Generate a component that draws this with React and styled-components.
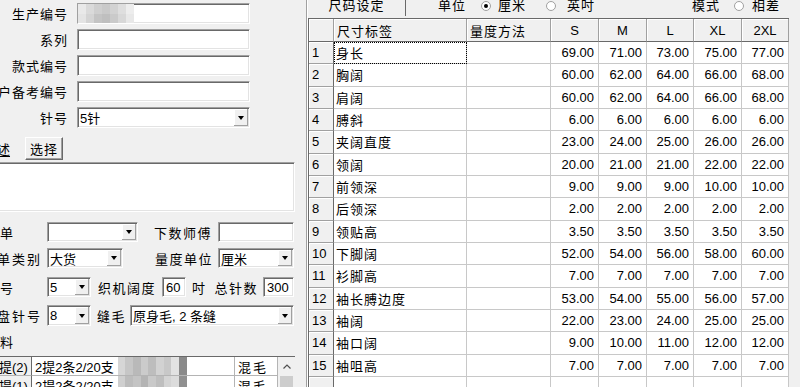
import React from 'react';
import styled, { createGlobalStyle, css } from 'styled-components';

const GlobalStyle = createGlobalStyle`
  html, body {
    margin: 0;
    padding: 0;
    background: #f0f0f0;
    overflow: hidden;
  }
  body {
    font-family: "Liberation Sans", "Noto Sans CJK SC", sans-serif;
    font-size: 13px;
    color: #000;
  }
  * { box-sizing: border-box; }
`;

const sunken = css`
  background: #fff;
  border: 1px solid;
  border-color: #a0a0a0 #fff #fff #a0a0a0;
  box-shadow: inset 1px 1px 0 #696969, inset -1px -1px 0 #e3e3e3;
`;

const raised = css`
  background: #f0f0f0;
  border: 1px solid;
  border-color: #fff #696969 #696969 #fff;
  box-shadow: inset -1px -1px 0 #a0a0a0;
`;

const Page = styled.div`
  display: flex;
  width: 800px;
  height: 387px;
  overflow: hidden;
  background: #f0f0f0;
`;

/* ---------- left form ---------- */

const LeftPanel = styled.div`
  width: 307px;
  flex: none;
  border-right: 1px solid #a0a0a0;
  padding-top: 3px;
  display: flex;
  flex-direction: column;

  & > * {
    flex-shrink: 0;
  }
`;

const FieldRow = styled.div`
  display: flex;
  align-items: center;
  height: 21px;
  margin-bottom: 5px;
`;

const FieldLabel = styled.div`
  width: 68px;
  flex: none;
  margin-right: 9px;
  display: flex;
  justify-content: flex-end;
  white-space: nowrap;
  letter-spacing: 1px;
`;

const TextBox = styled.div`
  ${sunken};
  width: ${p => p.$w}px;
  height: ${p => p.$h || 21}px;
  flex: none;
  display: flex;
  align-items: center;
  padding-left: ${p => (p.$flush ? 0 : 3)}px;
  overflow: hidden;
  white-space: nowrap;
`;

const SelectText = styled.span`
  flex: 1;
  padding-left: 2px;
  white-space: nowrap;
  overflow: hidden;
`;

const DropButton = styled.span`
  width: 14px;
  height: ${p => p.$h}px;
  margin-right: 1px;
  flex: none;
  display: flex;
  align-items: center;
  justify-content: center;
  background: #f0f0f0;
  box-shadow: inset -1px -1px 0 #a0a0a0, inset 1px 1px 0 #fff;

  &::after {
    content: '';
    width: 0;
    height: 0;
    border-left: 3.5px solid transparent;
    border-right: 3.5px solid transparent;
    border-top: 4px solid #000;
  }
`;

const Select = ({ w, h = 21, children }) => (
  <TextBox $w={w} $h={h} $flush>
    <SelectText>{children}</SelectText>
    <DropButton $h={h - 4} />
  </TextBox>
);

const Mosaic = styled.div`
  display: grid;
  grid-template-columns: repeat(${p => p.$cols}, 1fr);
  width: ${p => p.$w}px;
  align-self: stretch;
  margin-left: ${p => p.$ml || 0}px;
  flex: none;
`;

const Tile = styled.span`
  background: ${p => p.$c};
`;

const DescRow = styled.div`
  display: flex;
  align-items: center;
  height: 23px;
  margin-top: 4px;
`;

const DescLabel = styled.span`
  width: 28px;
  margin-left: -3px;
  flex: none;
  text-decoration: underline;
  text-underline-offset: 2px;
`;

const Button = styled.div`
  ${raised};
  width: 38px;
  height: 23px;
  display: flex;
  align-items: center;
  justify-content: center;
  letter-spacing: 1px;
`;

const TextArea = styled.div`
  ${sunken};
  width: 297px;
  height: 50px;
  margin: 2px 0 0 -2px;
`;

const LowerRow = styled.div`
  display: flex;
  align-items: center;
  height: ${p => p.$h || 20}px;
  margin-top: ${p => p.$mt}px;
`;

const Lbl = styled.span`
  width: ${p => p.$w}px;
  flex: none;
  display: flex;
  justify-content: ${p => (p.$right ? 'flex-end' : 'flex-start')};
  padding-right: ${p => p.$pr || 0}px;
  padding-left: ${p => p.$pl || 0}px;
  margin-left: ${p => p.$shift || 0}px;
  white-space: nowrap;
  letter-spacing: ${p => p.$ls ?? 1.5}px;
`;

const ListWrap = styled.div`
  display: flex;
  width: 297px;
  margin: 7px 0 0 -2px;
  border-top: 1px solid #696969;
`;

const ListGrid = styled.div`
  display: grid;
  grid-template-columns: 34px 203px 43px;
  grid-auto-rows: 19px;
  background: #fff;
`;

const ListCell = styled.div`
  display: flex;
  align-items: center;
  white-space: nowrap;
  overflow: hidden;
  border-right: 1px solid ${p => (p.$head ? '#696969' : '#b4b4b4')};
  border-bottom: 1px solid #b4b4b4;
  background: ${p => (p.$head ? '#f0f0f0' : '#fff')};
  padding-left: ${p => p.$pl ?? 3}px;
  letter-spacing: ${p => p.$ls || 0}px;
`;

const ScrollBar = styled.div`
  width: 17px;
  display: flex;
  flex-direction: column;
  align-items: center;
  background: #f0f0f0;
`;

const ScrollArrow = styled.div`
  height: 19px;
  width: 17px;
  display: flex;
  align-items: center;
  justify-content: center;
`;

const ScrollThumb = styled.div`
  width: 13px;
  height: 40px;
  background: #cdcdcd;
`;

/* ---------- right sheet ---------- */

const RightPanel = styled.div`
  flex: 1;
  border-left: 1px solid #fff;
  display: flex;
  flex-direction: column;

  & > * {
    flex-shrink: 0;
  }
`;

const TopBar = styled.div`
  display: flex;
  align-items: flex-start;
  height: 18px;
`;

const Tab = styled.div`
  width: 98px;
  height: 16px;
  flex: none;
  background: #f0f0f0;
  border-right: 1px solid #696969;
  display: flex;
  justify-content: center;
  line-height: 12px;
  letter-spacing: 1px;
`;

const BarText = styled.span`
  margin-left: ${p => p.$ml}px;
  line-height: 12px;
  letter-spacing: 1px;
  white-space: nowrap;
`;

const Radio = styled.span`
  width: 10px;
  height: 10px;
  margin: 1px 0 0 ${p => p.$ml}px;
  flex: none;
  border-radius: 50%;
  background: #fff;
  border: 1px solid #a0a0a0;
  display: flex;
  align-items: center;
  justify-content: center;

  &::after {
    content: '';
    width: 4px;
    height: 4px;
    border-radius: 50%;
    background: ${p => (p.$on ? '#000' : 'transparent')};
  }
`;

const Sheet = styled.div`
  display: grid;
  grid-template-columns: 25px 133px 84px 48px 48px 47px 48px 47px;
  grid-template-rows: 23px repeat(16, 22.33px);
  width: 481px;
  border-left: 1px solid #696969;
  border-top: 1px solid #696969;
  background: #fff;
`;

const ColHead = styled.div`
  background: #f0f0f0;
  border-right: 1px solid #a0a0a0;
  border-bottom: 1px solid #696969;
  box-shadow: inset 1px 1px 0 #fff;
  display: flex;
  align-items: center;
  justify-content: ${p => (p.$center ? 'center' : 'flex-start')};
  padding-left: ${p => (p.$center ? 0 : 3)}px;
  letter-spacing: ${p => (p.$center ? 0 : 1)}px;
  white-space: nowrap;
`;

const RowHead = styled.div`
  background: #f0f0f0;
  border-right: 1px solid #696969;
  border-bottom: 1px solid #a0a0a0;
  box-shadow: inset 1px 1px 0 #fff;
  display: flex;
  align-items: center;
  padding-left: 3px;
`;

const Cell = styled.div`
  border-right: 1px solid #c8c8c8;
  border-bottom: 1px solid #c8c8c8;
  display: flex;
  align-items: center;
  justify-content: ${p => (p.$num ? 'flex-end' : 'flex-start')};
  padding: 0 4px 0 2px;
  letter-spacing: ${p => (p.$num ? 0 : 1)}px;
  white-space: nowrap;
  outline: ${p => (p.$focus ? '1px dotted #000' : 'none')};
  outline-offset: -1px;
`;

const sizes = ['S', 'M', 'L', 'XL', '2XL'];

const rows = [
  ['身长', '69.00', '71.00', '73.00', '75.00', '77.00'],
  ['胸阔', '60.00', '62.00', '64.00', '66.00', '68.00'],
  ['肩阔', '60.00', '62.00', '64.00', '66.00', '68.00'],
  ['膊斜', '6.00', '6.00', '6.00', '6.00', '6.00'],
  ['夹阔直度', '23.00', '24.00', '25.00', '26.00', '26.00'],
  ['领阔', '20.00', '21.00', '21.00', '22.00', '22.00'],
  ['前领深', '9.00', '9.00', '9.00', '10.00', '10.00'],
  ['后领深', '2.00', '2.00', '2.00', '2.00', '2.00'],
  ['领贴高', '3.50', '3.50', '3.50', '3.50', '3.50'],
  ['下脚阔', '52.00', '54.00', '56.00', '58.00', '60.00'],
  ['衫脚高', '7.00', '7.00', '7.00', '7.00', '7.00'],
  ['袖长膊边度', '53.00', '54.00', '55.00', '56.00', '57.00'],
  ['袖阔', '22.00', '23.00', '24.00', '25.00', '25.00'],
  ['袖口阔', '9.00', '10.00', '11.00', '12.00', '12.00'],
  ['袖咀高', '7.00', '7.00', '7.00', '7.00', '7.00'],
];

const idMosaic = [
  '#e9e9e9', '#dadada', '#cfcfcf', '#c9c9c9', '#d2d2d2', '#dedede', '#ededed',
  '#e4e4e4', '#d4d4d4', '#c4c4c4', '#bfbfbf', '#cacaca', '#d8d8d8', '#e8e8e8',
];

const yarnMosaic = [
  ['#d6d6d6', '#c6c6c6', '#b9b9b9', '#cbcbcb', '#bdbdbd', '#d2d2d2', '#c8c8c8', '#e2e2e2', '#8a8a8a'],
  ['#cfcfcf', '#bcbcbc', '#c4c4c4', '#b4b4b4', '#c9c9c9', '#bebebe', '#d4d4d4', '#dcdcdc', '#909090'],
];

const yarns = [
  { code: '提(2)', name: '2提2条2/20支', kind: '混毛' },
  { code: '提(1)', name: '2提2条2/20支', kind: '混毛' },
];

const UpIcon = () => (
  <svg width="8" height="5" viewBox="0 0 8 5">
    <polyline points="0.5,4.5 4,1 7.5,4.5" fill="none" stroke="#505050" strokeWidth="1.2" />
  </svg>
);

export default function App() {
  return (
    <>
      <GlobalStyle />
      <Page>
        <LeftPanel>
          <FieldRow>
            <FieldLabel>生产编号</FieldLabel>
            <TextBox $w={173} $flush>
              <Mosaic $cols={7} $w={56}>
                {idMosaic.map((c, i) => <Tile key={i} $c={c} />)}
              </Mosaic>
            </TextBox>
          </FieldRow>
          <FieldRow>
            <FieldLabel>系列</FieldLabel>
            <TextBox $w={173} />
          </FieldRow>
          <FieldRow>
            <FieldLabel>款式编号</FieldLabel>
            <TextBox $w={173} />
          </FieldRow>
          <FieldRow>
            <FieldLabel>客户备考编号</FieldLabel>
            <TextBox $w={173} />
          </FieldRow>
          <FieldRow>
            <FieldLabel>针号</FieldLabel>
            <Select w={173}>5针</Select>
          </FieldRow>

          <DescRow>
            <DescLabel>述</DescLabel>
            <Button>选择</Button>
          </DescRow>
          <TextArea />

          <LowerRow $mt={10}>
            <Lbl $w={47}>单</Lbl>
            <Select w={91} h={20} />
            <Lbl $w={80} $right $pr={6}>下数师傅</Lbl>
            <TextBox $w={76} $h={20} />
          </LowerRow>
          <LowerRow $mt={6}>
            <Lbl $w={50} $shift={-3} $ls={2}>单类别</Lbl>
            <Select w={76} h={20}>大货</Select>
            <Lbl $w={95} $right $pr={5}>量度单位</Lbl>
            <Select w={76} h={20}>厘米</Select>
          </LowerRow>
          <LowerRow $mt={9}>
            <Lbl $w={47}>号</Lbl>
            <Select w={44} h={20}>5</Select>
            <Lbl $w={71} $right $pr={6}>织机阔度</Lbl>
            <TextBox $w={24} $h={20}>60</TextBox>
            <Lbl $w={21} $pl={6}>吋</Lbl>
            <Lbl $w={56} $right $pr={5}>总针数</Lbl>
            <TextBox $w={31} $h={20}>300</TextBox>
          </LowerRow>
          <LowerRow $mt={8} $h={21}>
            <Lbl $w={50} $shift={-3} $ls={2}>盘针号</Lbl>
            <Select w={44} h={21}>8</Select>
            <Lbl $w={39} $right $pr={4}>缝毛</Lbl>
            <Select w={164} h={21}>原身毛, 2 条缝</Select>
          </LowerRow>
          <LowerRow $mt={7} $h={16}>
            <Lbl $w={20}>料</Lbl>
          </LowerRow>

          <ListWrap>
            <ListGrid>
              {yarns.map((y, r) => (
                <React.Fragment key={r}>
                  <ListCell $head $pl={1}>{y.code}</ListCell>
                  <ListCell>
                    {y.name}
                    <Mosaic $cols={9} $w={69} $ml={4}>
                      {yarnMosaic[r].map((c, i) => <Tile key={i} $c={c} />)}
                    </Mosaic>
                  </ListCell>
                  <ListCell $ls={2}>{y.kind}</ListCell>
                </React.Fragment>
              ))}
            </ListGrid>
            <ScrollBar>
              <ScrollArrow>
                <UpIcon />
              </ScrollArrow>
              <ScrollThumb />
            </ScrollBar>
          </ListWrap>
        </LeftPanel>

        <RightPanel>
          <TopBar>
            <Tab>尺码设定</Tab>
            <BarText $ml={32}>单位</BarText>
            <Radio $ml={15} $on />
            <BarText $ml={7}>厘米</BarText>
            <Radio $ml={20} />
            <BarText $ml={11}>英吋</BarText>
            <BarText $ml={97}>模式</BarText>
            <Radio $ml={14} />
            <BarText $ml={8}>相差</BarText>
          </TopBar>

          <Sheet>
            <ColHead />
            <ColHead>尺寸标签</ColHead>
            <ColHead>量度方法</ColHead>
            {sizes.map(s => (
              <ColHead key={s} $center>{s}</ColHead>
            ))}
            {rows.map(([name, ...vals], i) => (
              <React.Fragment key={name}>
                <RowHead>{i + 1}</RowHead>
                <Cell $focus={i === 0}>{name}</Cell>
                <Cell />
                {vals.map((v, j) => (
                  <Cell key={j} $num>{v}</Cell>
                ))}
              </React.Fragment>
            ))}
            <RowHead />
            {Array.from({ length: 7 }, (_, j) => <Cell key={j} />)}
          </Sheet>
        </RightPanel>
      </Page>
    </>
  );
}
